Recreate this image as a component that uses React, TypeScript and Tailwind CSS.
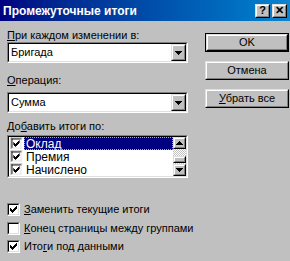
import React from "react";

const Check = () => (
  <svg width="7" height="7" viewBox="0 0 7 7" shapeRendering="crispEdges" className="block">
    <path
      d="M6 0h1v3h-1zM5 1h1v3h-1zM4 2h1v3h-1zM3 3h1v3h-1zM2 4h1v3h-1zM1 3h1v3h-1zM0 2h1v3h-1z"
      fill="#000"
    />
  </svg>
);

const CheckBox = ({ checked }: { checked: boolean }) => (
  <div className="w-[13px] h-[13px] shrink-0 border border-t-[#808080] border-l-[#808080] border-r-white border-b-white">
    <div className="w-full h-full bg-white border border-t-black border-l-black border-r-[#dfdfdf] border-b-[#dfdfdf] flex items-center justify-center">
      {checked && <Check />}
    </div>
  </div>
);

const Raised = ({ className = "", children }: { className?: string; children?: React.ReactNode }) => (
  <div className={`border border-t-[#dfdfdf] border-l-[#dfdfdf] border-r-black border-b-black bg-[#c0c0c0] ${className}`}>
    <div className="w-full h-full border border-t-white border-l-white border-r-[#808080] border-b-[#808080] flex items-center justify-center">
      {children}
    </div>
  </div>
);

const Arrow = ({ up }: { up?: boolean }) => (
  <svg width="7" height="4" viewBox="0 0 7 4" shapeRendering="crispEdges" className="block">
    <path d={up ? "M3 0h1v1h1v1h1v1h1v1h-7v-1h1v-1h1v-1h1z" : "M0 0h7v1h-1v1h-1v1h-1v1h-1v-1h-1v-1h-1v-1h-1z"} fill="#000" />
  </svg>
);

const Combo = ({ value }: { value: string }) => (
  <div className="h-[21px] border border-t-[#808080] border-l-[#808080] border-r-white border-b-white">
    <div className="h-full bg-white border border-t-black border-l-black border-r-[#dfdfdf] border-b-[#dfdfdf] flex items-center">
      <span className="pl-[2px] flex-1 leading-none">{value}</span>
      <Raised className="w-[15px] h-[17px]">
        <Arrow />
      </Raised>
    </div>
  </div>
);

const Btn = ({ children, def }: { children: React.ReactNode; def?: boolean }) =>
  def ? (
    <div className="h-[19px] border border-black">
      <Raised className="h-full">{children}</Raised>
    </div>
  ) : (
    <Raised className="h-[19px]">{children}</Raised>
  );

const items = ["Оклад", "Премия", "Начислено"];

export default function App() {
  return (
    <div className="w-[290px] h-[261px] bg-[#c0c0c0] overflow-hidden font-['Liberation_Sans',Arial,sans-serif] text-[11px] text-black">
      <div className="h-[21px] flex items-center bg-linear-to-r from-[#000080] to-[#1084d0] pl-[3px] pr-[3px]">
        <span className="text-white font-bold text-[12px]">Промежуточные итоги</span>
        <div className="ml-auto flex gap-[2px]">
          <Raised className="w-[15px] h-[14px]">
            <span className="font-bold text-[11px] leading-none">?</span>
          </Raised>
          <Raised className="w-[15px] h-[14px]">
            <span className="font-bold text-[11px] leading-none">✕</span>
          </Raised>
        </div>
      </div>

      <div className="flex">
        <div className="ml-[7px] w-[181px]">
          <div className="mt-[8px] leading-[13px]">
            <u>П</u>ри каждом изменении в:
          </div>
          <Combo value="Бригада" />
          <div className="mt-[11px] leading-[13px]">
            <u>О</u>перация:
          </div>
          <div className="mt-[5px]">
            <Combo value="Сумма" />
          </div>
          <div className="mt-[7px] leading-[13px]">
            До<u>б</u>авить итоги по:
          </div>
          <div className="mt-[2px] h-[43px] border border-t-[#808080] border-l-[#808080] border-r-white border-b-white">
            <div className="h-full bg-white border border-t-black border-l-black border-r-[#dfdfdf] border-b-[#dfdfdf] flex">
              <div className="flex-1 text-[12px]">
                {items.map((t, i) => (
                  <div key={t} className="h-[13px] flex items-center">
                    <div className="pl-[1px] pr-[1px]">
                      <div className="scale-[0.9]">
                        <CheckBox checked />
                      </div>
                    </div>
                    <div
                      className={`flex-1 h-full flex items-center pl-[2px] ${
                        i === 0 ? "bg-[#000080] text-white outline outline-1 outline-dotted outline-[#c0c000] -outline-offset-1" : ""
                      }`}
                    >
                      {t}
                    </div>
                  </div>
                ))}
              </div>
              <div className="w-[13px] flex flex-col">
                <Raised className="h-[12px]">
                  <Arrow up />
                </Raised>
                <div className="h-[7px] bg-[repeating-conic-gradient(#ffffff_0_25%,#c0c0c0_0_50%)] bg-[length:2px_2px]" />
                <Raised className="h-[7px]" />
                <div className="flex-1 bg-[repeating-conic-gradient(#ffffff_0_25%,#c0c0c0_0_50%)] bg-[length:2px_2px]" />
                <Raised className="h-[12px]">
                  <Arrow />
                </Raised>
              </div>
            </div>
          </div>

          <div className="mt-[22px] flex flex-col">
            <div className="h-[19px] flex items-center gap-[4px] whitespace-nowrap">
              <CheckBox checked />
              <span>
                <u>З</u>аменить текущие итоги
              </span>
            </div>
            <div className="h-[18px] flex items-center gap-[4px] whitespace-nowrap">
              <CheckBox checked={false} />
              <span>
                <u>К</u>онец страницы между группами
              </span>
            </div>
            <div className="h-[19px] flex items-center gap-[4px] whitespace-nowrap">
              <CheckBox checked />
              <span>
                Ито<u>г</u>и под данными
              </span>
            </div>
          </div>
        </div>

        <div className="ml-[17px] w-[84px] mt-[12px] flex flex-col gap-[9px]">
          <Btn def>OK</Btn>
          <Btn>Отмена</Btn>
          <Btn>
            <span>
              <u>У</u>брать все
            </span>
          </Btn>
        </div>
      </div>
    </div>
  );
}
